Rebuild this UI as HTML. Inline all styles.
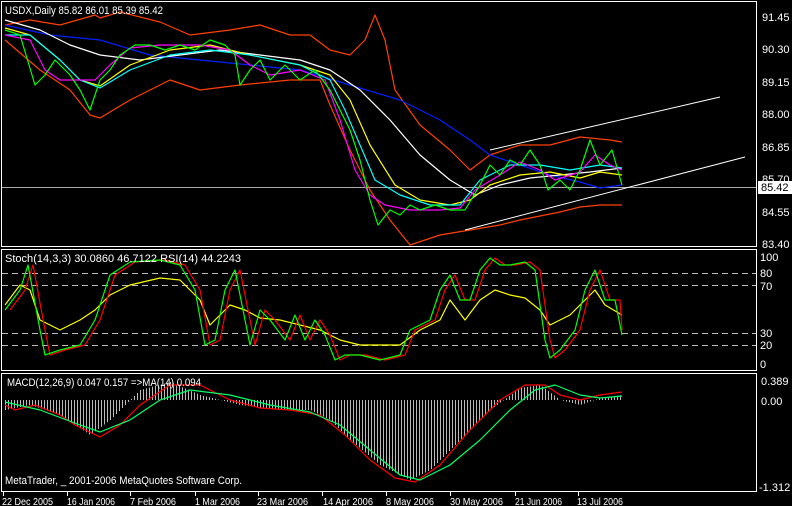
<!DOCTYPE html>
<html><head><meta charset="utf-8"><style>
html,body{margin:0;padding:0;background:#000;width:792px;height:506px;overflow:hidden}
svg{display:block;font-family:"Liberation Sans",sans-serif;font-size:11px}
</style></head><body>
<svg id="s" width="792" height="506" viewBox="0 0 792 506" xmlns="http://www.w3.org/2000/svg">
<rect width="792" height="506" fill="#000"/>
<g fill="none" stroke="#fff" stroke-width="1">
<rect x="1.5" y="1.5" width="755" height="245"/>
<rect x="1.5" y="249.5" width="755" height="121"/>
<rect x="1.5" y="373.5" width="755" height="118"/>
</g>
<line x1="2" y1="187.5" x2="756" y2="187.5" stroke="#aaa"/>
<g fill="none" stroke-width="1.2" stroke-linejoin="round">
<polyline stroke="#ff4000" points="5,25 30,20 60,25 95,15 100,18 120,12 160,22 190,35 230,30 260,25 290,35 310,35 330,50 350,55 365,40 375,15 385,40 395,90 420,125 450,150 470,170 490,155 520,145 550,145 580,137 610,140 622,142"/>
<polyline stroke="#ff4000" points="5,40 40,70 70,90 90,115 100,118 130,100 170,80 200,90 240,85 290,80 320,80 330,105 350,150 370,190 390,220 410,245 440,235 470,230 500,225 520,220 560,212 580,207 600,205 622,205"/>
<polyline stroke="#0020ff" points="5,25 50,35 100,40 150,55 200,60 250,65 300,70 350,85 400,100 440,120 470,140 490,155 520,165 550,175 580,182 600,188 622,185"/>
<polyline stroke="#fff" points="5,20 40,30 70,45 100,55 140,60 180,55 220,50 260,55 300,60 330,70 360,90 390,120 420,155 450,180 475,195 500,185 530,178 560,175 590,172 622,168"/>
<polyline stroke="#ffff00" points="5,28 30,35 60,60 80,80 100,86 130,65 170,50 210,45 250,55 300,65 330,75 350,100 370,145 395,185 420,200 450,205 470,200 490,185 520,175 550,172 580,178 600,172 622,175"/>
<polyline stroke="#00ffff" points="5,35 30,35 60,60 80,80 100,88 130,70 170,55 210,50 250,55 300,65 330,80 345,110 360,145 375,180 400,195 430,205 460,205 480,180 510,165 540,165 570,170 600,165 622,168"/>
<polyline stroke="#ff00ff" points="5,35 30,40 45,70 60,80 80,80 95,80 110,65 130,48 160,45 200,45 230,50 250,65 270,75 300,70 325,80 340,120 355,170 370,195 385,205 410,210 440,210 460,208 475,190 500,175 520,162 540,170 555,180 580,172 595,155 610,165 622,170"/>
<polyline stroke="#00ff00" points="5,30 20,35 35,85 45,75 55,60 70,75 80,90 90,110 100,80 110,70 120,55 135,45 150,45 165,50 180,45 195,50 210,40 225,45 235,55 240,85 250,70 260,60 270,80 285,65 300,80 315,70 330,90 340,110 350,130 360,160 370,200 378,225 390,210 400,215 410,205 420,210 435,205 450,210 465,210 480,185 490,165 500,175 510,160 520,165 530,150 540,165 548,190 560,180 570,190 580,170 590,140 600,165 612,150 622,185"/>
</g>
<line x1="490" y1="150" x2="720" y2="97" stroke="#fff"/>
<line x1="465" y1="230" x2="745" y2="157" stroke="#fff"/>
<text x="5" y="14" fill="#fff" textLength="158" lengthAdjust="spacingAndGlyphs">USDX,Daily  85.82 86.01 85.39 85.42</text>
<g fill="#fff">
<text x="762" y="21">91.45</text><text x="762" y="53">90.30</text><text x="762" y="86">89.15</text>
<text x="762" y="118">88.00</text><text x="762" y="151">86.85</text><text x="762" y="183">85.70</text>
<text x="762" y="216">84.55</text><text x="762" y="248">83.40</text>
</g>
<rect x="758" y="181" width="34" height="13" fill="#fff"/>
<text x="761" y="191" fill="#000">85.42</text>
<g stroke="#bbb" stroke-dasharray="6,4">
<line x1="2" y1="273.5" x2="756" y2="273.5"/><line x1="2" y1="285.5" x2="756" y2="285.5"/>
<line x1="2" y1="333.5" x2="756" y2="333.5"/><line x1="2" y1="345.5" x2="756" y2="345.5"/>
</g>
<g fill="none" stroke-width="1.2" stroke-linejoin="round">
<polyline stroke="#ffff00" points="5,305 20,285 30,290 40,320 60,330 80,320 95,310 110,295 130,285 160,278 180,280 200,300 210,325 230,305 245,310 260,318 280,320 300,325 320,330 340,340 360,345 380,345 400,345 420,330 440,320 450,300 465,320 480,300 495,290 510,295 525,298 540,310 550,325 570,315 585,300 595,290 605,305 622,315"/>
<polyline stroke="#ff0000" transform="translate(5,0)" points="5,310 20,290 28,265 40,330 45,355 60,350 80,345 95,320 110,275 130,262 160,260 180,265 195,290 205,345 215,340 225,290 235,270 245,320 250,345 260,310 270,320 285,340 295,315 305,340 315,320 325,335 335,360 345,355 360,355 380,360 400,355 410,330 430,320 440,290 450,275 460,300 470,300 480,270 490,258 500,265 510,265 525,262 535,270 545,340 550,358 560,350 575,330 585,290 595,270 605,300 615,300 617,330"/>
<polyline stroke="#00ff00" points="5,310 20,290 28,265 40,330 45,355 60,350 80,345 95,320 110,275 130,262 160,260 180,265 195,290 205,345 215,340 225,290 235,270 245,320 250,345 260,310 270,320 285,340 295,315 305,340 315,320 325,335 335,360 345,355 360,355 380,360 400,355 410,330 430,320 440,290 450,275 460,300 470,300 480,270 490,258 500,265 510,265 525,262 535,270 545,340 550,358 560,350 575,330 585,290 595,270 605,300 615,300 622,335"/>
</g>
<text x="5" y="262" fill="#fff" textLength="236" lengthAdjust="spacingAndGlyphs">Stoch(14,3,3) 30.0860 46.7122  RSI(14) 44.2243</text>
<g fill="#fff">
<text x="760" y="261">100</text><text x="760" y="277">80</text><text x="760" y="290">70</text>
<text x="760" y="337">30</text><text x="760" y="349">20</text><text x="760" y="368">0</text>
</g>
<g id="bars" stroke="#bbb" stroke-width="1"></g>
<g fill="none" stroke-width="1.2" stroke-linejoin="round">
<polyline stroke="#ff0000" points="5,405 15,410 35,405 60,415 75,425 100,437 120,425 140,405 170,385 200,385 230,400 260,408 290,410 320,415 345,435 370,460 395,478 415,482 440,465 470,430 500,400 525,385 545,385 560,395 580,400 600,395 622,392"/>
<polyline stroke="#00ff66" points="5,402 40,410 80,425 100,432 130,420 160,400 190,390 230,395 270,405 310,412 340,425 370,450 400,475 420,480 450,465 480,440 510,410 535,390 555,385 580,395 600,398 622,396"/>
</g>
<text x="7" y="386" fill="#fff" textLength="194" lengthAdjust="spacingAndGlyphs">MACD(12,26,9) 0.047 0.157  =&gt;MA(14) 0.094</text>
<text x="5" y="484" fill="#fff" textLength="237" lengthAdjust="spacingAndGlyphs">MetaTrader, _ 2001-2006 MetaQuotes Software Corp.</text>
<g fill="#fff"><text x="761" y="385">0.389</text><text x="761" y="405">0.00</text><text x="759" y="491">-1.312</text></g>
<g stroke="#fff"><line x1="3.5" y1="492" x2="3.5" y2="496"/><line x1="67.5" y1="492" x2="67.5" y2="496"/><line x1="130.5" y1="492" x2="130.5" y2="496"/><line x1="195.5" y1="492" x2="195.5" y2="496"/><line x1="258.5" y1="492" x2="258.5" y2="496"/><line x1="322.5" y1="492" x2="322.5" y2="496"/><line x1="386.5" y1="492" x2="386.5" y2="496"/><line x1="450.5" y1="492" x2="450.5" y2="496"/><line x1="515.5" y1="492" x2="515.5" y2="496"/><line x1="578.5" y1="492" x2="578.5" y2="496"/></g>
<g fill="#fff" font-size="10.5">
<text x="2" y="505" textLength="51" lengthAdjust="spacingAndGlyphs">22 Dec 2005</text>
<text x="67" y="505" textLength="48" lengthAdjust="spacingAndGlyphs">16 Jan 2006</text>
<text x="130" y="505" textLength="46" lengthAdjust="spacingAndGlyphs">7 Feb 2006</text>
<text x="195" y="505" textLength="45" lengthAdjust="spacingAndGlyphs">1 Mar 2006</text>
<text x="257" y="505" textLength="51" lengthAdjust="spacingAndGlyphs">23 Mar 2006</text>
<text x="323" y="505" textLength="50" lengthAdjust="spacingAndGlyphs">14 Apr 2006</text>
<text x="386" y="505" textLength="48" lengthAdjust="spacingAndGlyphs">8 May 2006</text>
<text x="450" y="505" textLength="53" lengthAdjust="spacingAndGlyphs">30 May 2006</text>
<text x="515" y="505" textLength="47" lengthAdjust="spacingAndGlyphs">21 Jun 2006</text>
<text x="577" y="505" textLength="46" lengthAdjust="spacingAndGlyphs">13 Jul 2006</text>
</g>
</svg>
<script>
var p=[[5,410],[30,405],[60,415],[90,435],[110,420],[140,390],[170,382],[200,395],[240,405],[280,410],[310,410],[330,420],[350,440],[380,465],[410,480],[430,470],[460,440],[490,410],[520,388],[540,385],[560,400],[580,405],[600,398],[622,395]];
var g=document.getElementById('bars'),ns='http://www.w3.org/2000/svg';
for(var x=5;x<=622;x+=3){var i=0;while(i<p.length-2&&p[i+1][0]<x)i++;var a=p[i],b=p[i+1],t=(x-a[0])/(b[0]-a[0]);var y=a[1]+(b[1]-a[1])*t;
var l=document.createElementNS(ns,'line');l.setAttribute('x1',x+.5);l.setAttribute('x2',x+.5);l.setAttribute('y1',400);l.setAttribute('y2',y);g.appendChild(l);}
</script>
</body></html>
